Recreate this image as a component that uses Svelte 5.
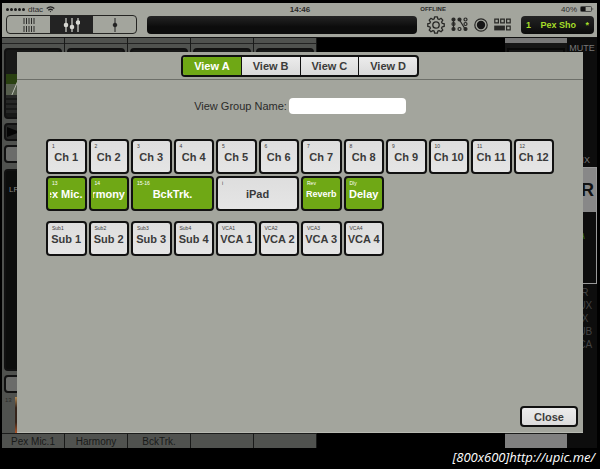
<script lang="ts">
	type Channel = {
		tag: string;
		name: string;
		wide?: boolean;
		on?: boolean;
		fit?: 'small' | 'clip';
	};

	let view = $state('A');
	let groupName = $state('');
	let open = $state(true);

	let inputs = $state<Channel[]>(
		Array.from({ length: 12 }, (_, i) => ({ tag: `${i + 1}`, name: `Ch ${i + 1}` }))
	);
	let named = $state<Channel[]>([
		{ tag: '13', name: 'Pex Mic.', on: true, fit: 'clip' },
		{ tag: '14', name: 'Harmony', on: true, fit: 'clip' },
		{ tag: '15-16', name: 'BckTrk.', wide: true, on: true },
		{ tag: 'i', name: 'iPad', wide: true },
		{ tag: 'Rev', name: 'Reverb', on: true, fit: 'small' },
		{ tag: 'Dly', name: 'Delay', on: true }
	]);
	let groups = $state<Channel[]>([
		...[1, 2, 3, 4].map((n) => ({ tag: `Sub${n}`, name: `Sub ${n}` })),
		...[1, 2, 3, 4].map((n) => ({ tag: `VCA${n}`, name: `VCA ${n}` }))
	]);

	const strips = ['Pex Mic.1', 'Harmony', 'BckTrk.', '', ''];
	const sends = ['LR', 'AUX', 'FX', 'SUB', 'VCA'];
</script>

{#snippet channelRow(list: Channel[])}
	<div class="channel-row">
		{#each list as ch}
			<button
				class="channel"
				class:wide={ch.wide}
				class:on={ch.on}
				aria-pressed={!!ch.on}
				onclick={() => (ch.on = !ch.on)}
			>
				<span class="tag">{ch.tag}</span>
				<span class="name" class:small={ch.fit === 'small'} class:clip={ch.fit === 'clip'}>
					<span>{ch.name}</span>
				</span>
			</button>
		{/each}
	</div>
{/snippet}

<div class="app">
	<header>
		<div class="status">
			<div class="carrier">
				<span class="signal">
					{#each [1, 2, 3, 4, 5] as _}<i></i>{/each}
				</span>
				dtac
				<svg width="9" height="7" viewBox="0 0 9 7" fill="none" stroke="#222" stroke-width="1.3">
					<path d="M.7 2.6Q4.5-.9 8.3 2.6M2.3 4.2Q4.5 2.2 6.7 4.2" />
					<circle cx="4.5" cy="5.6" r=".6" fill="#222" stroke="none" />
				</svg>
			</div>
			<span class="clock">14:46</span>
			<div class="power">
				<span class="offline">OFFLINE</span>
				<span class="battery">
					40%
					<svg width="14" height="6" viewBox="0 0 14 6">
						<rect x=".5" y=".5" width="11" height="5" rx="1" fill="none" stroke="#333" stroke-width=".8" />
						<rect x="1" y="1" width="4.6" height="4" fill="#111" />
						<path d="M12.5 2v2l1-1z" fill="#333" />
					</svg>
				</span>
			</div>
		</div>
		<div class="toolbar">
			<div class="modes">
				<button aria-label="Overview">
					<svg width="12" height="16" viewBox="0 0 12 16" stroke="#2b2b29" stroke-width="1">
						<path d="M1 1v6M3.5 1v6M6 1v6M8.5 1v6M11 1v6M1 9v6M3.5 9v6M6 9v6M8.5 9v6M11 9v6" />
					</svg>
				</button>
				<button class="current" aria-label="Mixer">
					<svg width="17" height="16" viewBox="0 0 17 16" stroke="#d6d7d1" stroke-width="1.2" fill="#d6d7d1">
						<path d="M3 1v14M9 1v14M15 1v14" />
						<circle cx="3" cy="8" r="1.7" />
						<circle cx="9" cy="10" r="1.7" />
						<circle cx="15" cy="5.5" r="1.7" />
					</svg>
				</button>
				<button aria-label="Channel">
					<svg width="6" height="16" viewBox="0 0 6 16" stroke="#222" fill="#222">
						<path d="M3 1v14" />
						<circle cx="3" cy="8" r="1.8" />
					</svg>
				</button>
			</div>
			<div class="display"></div>
			<div class="tools">
				<button aria-label="Settings">
					<svg width="18" height="18" viewBox="0 0 18 18" fill="none" stroke="#282826" stroke-width="1.3" stroke-linejoin="round">
						<path
							d="M7.6.8h2.8l.4 2.1 1.3.6 1.9-1.2 1.8 1.8-1.2 1.9.6 1.3 2 .4v2.7l-2 .4-.6 1.3 1.2 1.9-1.8 1.8-1.9-1.2-1.3.6-.4 2H7.6l-.4-2-1.3-.6L4 15.8 2.2 14l1.2-1.9-.6-1.3-2-.4V7.7l2-.4.6-1.3L2.2 4.1 4 2.3l1.9 1.2 1.3-.6z"
						/>
						<circle cx="9" cy="9" r="3.2" />
					</svg>
				</button>
				<button aria-label="Routing">
					<svg width="17" height="15" viewBox="0 0 17 15" fill="none" stroke="#282826" stroke-width="1.2">
						<path d="M2.5 4v7M8.5 3l5 8" />
						<g fill="#282826">
							<circle cx="2.5" cy="2.5" r="1.5" />
							<circle cx="8.5" cy="2.5" r="1.5" />
							<circle cx="2.5" cy="12" r="1.5" />
							<circle cx="14.5" cy="12" r="1.5" />
						</g>
						<circle cx="14.5" cy="2.5" r="1.5" />
						<circle cx="14.5" cy="7" r="1.5" />
						<circle cx="8.5" cy="12" r="1.5" />
						<circle cx="2.5" cy="7" r="1.5" />
					</svg>
				</button>
				<button aria-label="Record">
					<svg width="14" height="14" viewBox="0 0 14 14">
						<circle cx="7" cy="7" r="6.2" fill="none" stroke="#282826" stroke-width="1.2" />
						<circle cx="7" cy="7" r="4.2" fill="#161616" />
					</svg>
				</button>
				<button aria-label="Quick assign">
					<svg width="17" height="13" viewBox="0 0 17 13" fill="none" stroke="#282826" stroke-width="1.2">
						<path d="M.8 1.2h3.6v3.6H.8zM6.7 1.2h3.6v3.6H6.7zM12.6 1.2h3.6v3.6h-3.6zM12.6 8.2h3.6v3.6h-3.6z" />
						<path d="M.2 7.6h10.7v4.8H.2z" fill="#282826" stroke="none" />
					</svg>
				</button>
			</div>
			<button class="song"><span>1</span><span>Pex Sho</span><span>*</span></button>
		</div>
	</header>

	<main>
		<div class="strips">
			{#each strips as name, i}
				<section class="strip">
					<div class="cap"></div>
					<div class="eq">
						<svg class="curve" viewBox="0 0 55 21" preserveAspectRatio="none">
							<path d="M0 0h55v10H0z" fill="#294010" />
							<path d="M0 10h55v11H0z" fill="#555d4c" />
							<path d="M6 21l6-14" stroke="#b9bdb2" />
						</svg>
						<div class="lines"></div>
					</div>
					<div class="gate">
						<svg width="14" height="10" viewBox="0 0 14 10"><path d="M1 0l13 5-13 5z" fill="#050505" /></svg>
					</div>
					<div class="pad"></div>
					<div class="fader">{i === 0 ? 'LR' : ''}</div>
					<div class="pad"></div>
					<div class="number">
						{#if i === 0}<span>13</span><span class="photo"></span>{/if}
					</div>
					<div class="plate">{name}</div>
				</section>
			{/each}
		</div>
		<section class="master">
			<div class="master-cap"></div>
			<div class="master-body"></div>
			<div class="plate"></div>
		</section>
		<aside>
			<span class="mute">MUTE</span>
			<span class="mix">MIX</span>
			<div class="output">
				<strong>LR</strong>
				<em>A</em>
			</div>
			<div class="sends">
				{#each sends as send}<span>{send}</span>{/each}
			</div>
		</aside>

		{#if open}
			<div class="modal" role="dialog" aria-label="View groups">
				<nav>
					<div class="tabs">
						{#each ['A', 'B', 'C', 'D'] as tab}
							<button class:active={view === tab} onclick={() => (view = tab)}>View {tab}</button>
						{/each}
					</div>
				</nav>
				<div class="group-name">
					<label for="group-name">View Group Name:</label>
					<input id="group-name" type="text" bind:value={groupName} />
				</div>
				<div class="channels">
					{@render channelRow(inputs)}
					{@render channelRow(named)}
					<div class="groups">{@render channelRow(groups)}</div>
				</div>
				<footer>
					<button class="close" onclick={() => (open = false)}>Close</button>
				</footer>
			</div>
		{/if}
	</main>
	<div class="credit">[800x600]http://upic.me/</div>
</div>

<style>
	:global(body) {
		background: #000;
	}

	.app {
		box-sizing: border-box;
		min-height: 100vh;
		padding: 3px 3px 0 2px;
		display: flex;
		flex-direction: column;
		font-family: 'Liberation Sans', Arial, sans-serif;
		color: #2b2b2a;
	}

	button {
		box-sizing: border-box;
		margin: 0;
		padding: 0;
		border: 0;
		background: none;
		font: inherit;
		color: inherit;
		cursor: pointer;
	}

	svg {
		display: block;
	}

	header {
		background: #a3a59d;
		padding: 0 3px 3px 4px;
	}

	.status {
		display: grid;
		grid-template-columns: 1fr auto 1fr;
		align-items: center;
		height: 12px;
		font-size: 8px;
	}

	.carrier,
	.signal,
	.battery {
		display: flex;
		align-items: center;
		gap: 3px;
	}

	.signal {
		gap: 1px;
	}

	.signal i {
		width: 3px;
		height: 3px;
		border-radius: 50%;
		background: #1b1b1b;
	}

	.clock {
		font-weight: bold;
	}

	.power {
		display: flex;
		justify-content: space-between;
		align-items: center;
		padding-left: 110px;
	}

	.offline {
		font-size: 6px;
		font-weight: bold;
	}

	.toolbar {
		display: flex;
		align-items: center;
		height: 19px;
	}

	.modes {
		display: flex;
		box-sizing: border-box;
		width: 131px;
		height: 19px;
		border: 1px solid #252523;
		border-radius: 4px;
		overflow: hidden;
		margin-right: 10px;
	}

	.modes button {
		flex: 1;
		display: flex;
		align-items: center;
		justify-content: center;
	}

	.modes .current {
		background: #232323;
	}

	.display {
		flex: 1;
		height: 18px;
		border-radius: 4px;
		background: linear-gradient(#252525, #0c0c0c 60%);
	}

	.tools {
		display: flex;
		align-items: center;
		gap: 6px;
		padding: 0 10px;
	}

	.song {
		display: flex;
		justify-content: space-between;
		align-items: center;
		width: 73px;
		height: 18px;
		padding: 0 5px;
		border-radius: 4px;
		background: linear-gradient(#242424, #0b0b0b);
		color: #a5dd28;
		font-size: 9px;
		font-weight: bold;
	}

	main {
		position: relative;
		display: flex;
		height: 411px;
		overflow: hidden;
		border-top: 1px solid #111;
		box-sizing: border-box;
	}

	.strips {
		flex: 1;
		display: flex;
	}

	.strip {
		display: flex;
		flex-direction: column;
		box-sizing: border-box;
		width: 63px;
		background: #50524f;
		border-right: 1px solid #191a19;
	}

	.cap {
		height: 5px;
		border-bottom: 1px solid #222;
		margin-bottom: 4px;
	}

	.eq,
	.gate,
	.pad,
	.fader {
		box-sizing: border-box;
		margin: 0 2px 4px;
		border: 2px solid #111;
		border-radius: 4px;
		background: #181918;
	}

	.eq {
		height: 71px;
		padding-top: 24px;
	}

	.curve {
		width: 100%;
		height: 21px;
	}

	.lines {
		height: 20px;
		background: repeating-linear-gradient(#262726 0 3px, #171817 3px 5px);
	}

	.gate {
		height: 18px;
		padding-top: 2px;
		background: #262726;
	}

	.pad {
		height: 18px;
		background: #6b6c6a;
	}

	.fader {
		height: 202px;
		margin-top: 2px;
		padding: 14px 0 0 3px;
		background: #0c0d0c;
		color: #858784;
		font-size: 8px;
	}

	.number {
		flex: 1;
		display: flex;
		gap: 3px;
		padding-left: 3px;
		font-size: 6px;
	}

	.photo {
		width: 40px;
		background: linear-gradient(#b48b55, #35241a 30% 70%, #ad5529);
	}

	.plate {
		box-sizing: border-box;
		height: 15px;
		border-top: 1px solid #1b1c1b;
		text-align: center;
		font-size: 10px;
		line-height: 15px;
		color: #191a19;
	}

	.master {
		display: flex;
		flex-direction: column;
		width: 62px;
		background: #151515;
	}

	.master-cap {
		height: 5px;
		background: #777;
	}

	.master-body {
		flex: 1;
		margin: 5px 2px 0;
		border: 2px solid #080808;
	}

	.master .plate {
		background: #808080;
	}

	aside {
		display: flex;
		flex-direction: column;
		align-items: center;
		width: 30px;
		background: #0d0d0d;
		color: #777;
		font-size: 9px;
		line-height: 12px;
	}

	.mute {
		padding-top: 4px;
	}

	.mix {
		padding: 100px 0 1px;
	}

	.output {
		box-sizing: border-box;
		width: 100%;
		height: 117px;
		border: 1px solid #999;
		text-align: center;
	}

	.output strong {
		display: block;
		background: #888;
		color: #111;
		font-size: 18px;
		line-height: 44px;
	}

	.output em {
		display: block;
		padding-top: 18px;
		color: #468014;
	}

	.sends {
		display: flex;
		flex-direction: column;
		padding-top: 2px;
		text-align: center;
		color: #444;
		font-size: 10px;
		line-height: 13px;
	}

	.modal {
		position: absolute;
		inset: 14px 14px 15px 15px;
		display: flex;
		flex-direction: column;
		background: #a3a59d;
		border-bottom: 1px solid #b8bab2;
	}

	nav {
		display: flex;
		justify-content: center;
		padding: 3px 0 2px;
		border-bottom: 1px solid #6d6f69;
	}

	.tabs {
		display: flex;
		box-sizing: border-box;
		width: 238px;
		border: 2px solid #111;
		border-radius: 4px;
		overflow: hidden;
		background: linear-gradient(#ececec, #dadada);
	}

	.tabs button {
		flex: 1;
		height: 18px;
		font-size: 11px;
		font-weight: bold;
		color: #3b3b3a;
	}

	.tabs button + button {
		border-left: 1px solid #111;
	}

	.tabs .active {
		background: #6fa815;
		color: #fff;
	}

	.group-name {
		display: flex;
		justify-content: center;
		align-items: center;
		gap: 2px;
		padding-top: 18px;
		font-size: 11px;
	}

	.group-name input {
		box-sizing: border-box;
		width: 117px;
		height: 16px;
		padding: 0 4px;
		border: 0;
		border-radius: 4px;
		background: #fff;
		font: inherit;
	}

	.channels {
		display: flex;
		flex-direction: column;
		gap: 2px;
		padding: 25px 29px 0;
	}

	.groups {
		padding-top: 8px;
	}

	.channel-row {
		display: grid;
		grid-template-columns: repeat(12, 1fr);
		gap: 2px;
	}

	.channel {
		display: flex;
		flex-direction: column;
		min-width: 0;
		height: 35px;
		padding: 2px 2px 0;
		border: 2px solid #111;
		border-radius: 4px;
		background: linear-gradient(#dedede, #e5e5e5);
		color: #3a3a3a;
		overflow: hidden;
	}

	.channel.wide {
		grid-column: span 2;
	}

	.channel.on {
		background: #6fa815;
		color: #fff;
	}

	.tag {
		align-self: flex-start;
		padding-left: 2px;
		font-size: 5px;
		line-height: 6px;
	}

	.name {
		display: flex;
		justify-content: center;
		align-self: stretch;
		font-size: 11px;
		font-weight: bold;
		line-height: 16px;
		white-space: nowrap;
	}

	.name.small {
		font-size: 9px;
	}

	/* long names keep their end and lose their start */
	.name.clip {
		justify-content: flex-end;
		overflow: hidden;
	}

	footer {
		display: flex;
		justify-content: flex-end;
		margin-top: auto;
		padding: 0 5px 5px;
	}

	.close {
		width: 58px;
		height: 21px;
		border: 2px solid #111;
		border-radius: 4px;
		background: linear-gradient(#ececec, #dcdcdc);
		font-size: 11px;
		font-weight: bold;
		color: #3b3b3a;
	}

	.credit {
		padding: 1px 2px 0 0;
		text-align: right;
		font-family: 'Open Sans', sans-serif;
		font-size: 13px;
		font-style: italic;
		line-height: 17px;
		color: #fff;
	}
</style>
